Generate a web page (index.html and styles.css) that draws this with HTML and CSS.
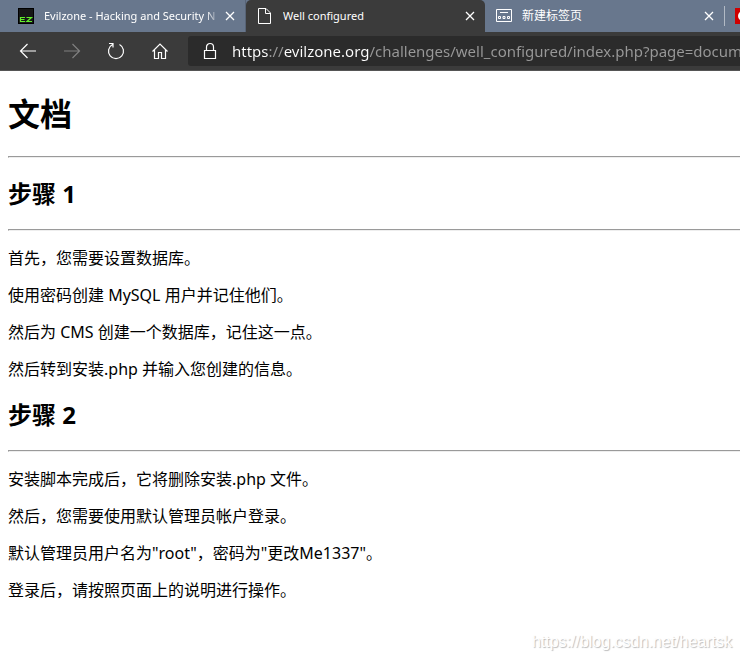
FILE: index.html
```html
<!DOCTYPE html>
<html lang="zh-CN">
<head>
<meta charset="utf-8">
<title>Well configured</title>
<link rel="stylesheet" href="styles.css">
</head>
<body>
<header class="browser">
  <div class="tabs">
    <div class="tab tab-first">
      <svg class="icon" viewBox="0 0 16 16"><rect x=".5" y=".5" width="15" height="15" fill="#171717" stroke="#000"/><path d="M7 9.500H2.500v4H7M2.500 11.500H6.500M8.500 9.500H13.500L9 13.500H14" fill="none" stroke="#62f02c" stroke-width="1.200"/></svg>
      <span class="tab-title fade">Evilzone - Hacking and Security N</span>
      <button class="close" aria-label="Close tab"><svg viewBox="0 0 10 10"><path d="M1 1l8 8M9 1l-8 8"/></svg></button>
    </div>
    <div class="tab tab-active">
      <svg class="icon" viewBox="0 0 16 16"><path d="M1.500.5H9L13.500 5V15.500H1.500ZM8.500.5V5.500H13.500" fill="none" stroke="#fff"/></svg>
      <span class="tab-title">Well configured</span>
      <button class="close" aria-label="Close tab"><svg viewBox="0 0 10 10"><path d="M1 1l8 8M9 1l-8 8"/></svg></button>
    </div>
    <div class="tab tab-new">
      <svg class="icon" viewBox="0 0 16 16"><path d="M.5 1.500h15v12H.5ZM4 4.500h8M2.500 8.500h2v2h-2ZM7 8.500h2v2H7ZM11.500 8.500h2v2h-2Z" fill="none" stroke="#fff"/></svg>
      <span class="tab-title">新建标签页</span>
      <button class="close" aria-label="Close tab"><svg viewBox="0 0 10 10"><path d="M1 1l8 8M9 1l-8 8"/></svg></button>
    </div>
    <div class="tab-next">
      <svg class="icon" viewBox="0 0 16 16"><rect width="16" height="16" fill="#d00000"/><circle cx="8" cy="8" r="5" fill="#fff"/></svg>
    </div>
  </div>
  <div class="toolbar">
    <button class="nav" aria-label="Back"><svg viewBox="0 0 18 18"><path d="M17 9H1.500M8.500 2l-7 7 7 7"/></svg></button>
    <button class="nav" aria-label="Forward" disabled><svg viewBox="0 0 18 18"><path d="M1 9h15.500M9.500 2l7 7-7 7"/></svg></button>
    <button class="nav" aria-label="Refresh"><svg viewBox="0 0 18 18"><path d="M5.500 2.500A7.500 7.500 0 1 0 12.500 2.500M2 1.500H6V5.500"/></svg></button>
    <button class="nav" aria-label="Home"><svg viewBox="0 0 18 18"><path d="M1.500 9.500L9 2l7.500 7.500M3.500 8v8.500h4v-6h3v6h4V8"/></svg></button>
    <div class="address">
      <svg class="lock" viewBox="0 0 14 18"><path d="M1.500 8.500h11v8h-11ZM3.500 8.500V5a3.500 3.500 0 0 1 7 0v3.500"/></svg>
      <input class="url" type="text" aria-label="Address" value="https://evilzone.org/challenges/well_configured/index.php?page=documentation">
    </div>
  </div>
</header>
<main class="page">
  <h1>文档</h1>
  <hr>
  <h2>步骤 1</h2>
  <hr>
  <p>首先，您需要设置数据库。</p>
  <p>使用密码创建 MySQL 用户并记住他们。</p>
  <p>然后为 CMS 创建一个数据库，记住这一点。</p>
  <p>然后转到安装.php 并输入您创建的信息。</p>
  <h2>步骤 2</h2>
  <hr>
  <p>安装脚本完成后，它将删除安装.php 文件。</p>
  <p>然后，您需要使用默认管理员帐户登录。</p>
  <p>默认管理员用户名为"root"，密码为"更改Me1337"。</p>
  <p>登录后，请按照页面上的说明进行操作。</p>
</main>
<div class="watermark">https://blog.csdn.net/heartsk</div>
</body>
</html>
```
FILE: styles.css
```css
* { box-sizing: border-box; }
body {
  margin: 0;
  min-height: 100vh;
  position: relative;
  overflow-x: hidden;
  background: #fff;
  color: #000;
  font: 16px/21px "Noto Sans", "Noto Sans CJK SC", sans-serif;
}
button { padding: 0; border: 0; background: none; color: #fff; }
svg { display: block; fill: none; stroke: currentColor; flex: none; }
.browser { background: #3b3b3b; border-bottom: 1px solid #555; }
.tabs { display: flex; height: 32px; background: #68778d; overflow: hidden; }
.tab {
  display: flex;
  align-items: center;
  flex: 0 0 239px;
  min-width: 0;
  padding: 0 10px 0 11px;
  color: #fff;
  font-size: 11px;
  line-height: 16px;
}
.tab-first { flex-basis: 246px; padding-left: 18px; border-right: 1px solid #586477; }
.tab-active { background: #3b3b3b; border-radius: 5px 5px 0 0; }
.tab-new { font-size: 12px; }
.icon { width: 16px; height: 16px; stroke: none; }
.tab-title { flex: 1; min-width: 0; margin: 0 4px 0 10px; overflow: hidden; white-space: nowrap; }
.fade { mask-image: linear-gradient(to right, #000 162px, transparent 176px); }
.close { width: 10px; height: 10px; }
.close svg { width: 10px; height: 10px; stroke-width: 1.3px; }
.tab-next { display: flex; align-items: center; flex: none; }
.tab-next::before { content: ""; width: 1px; height: 20px; margin-right: 10px; background: #b2bac5; }
.toolbar { display: flex; align-items: center; height: 38px; padding-left: 6px; }
.nav { display: flex; justify-content: center; flex: 0 0 44px; }
.nav svg { width: 18px; height: 18px; stroke-width: 1.2px; }
.nav:disabled { color: #808080; }
.address {
  display: flex;
  align-items: center;
  flex: 1;
  min-width: 0;
  height: 30px;
  margin-left: 6px;
  padding-left: 15px;
  background: #2b2b2b;
  border-radius: 3px 0 0 3px;
}
.lock { width: 14px; height: 18px; color: #fff; stroke-width: 1.2px; }
.url {
  flex: 1;
  min-width: 0;
  height: 26px;
  margin-left: 15px;
  padding: 0;
  border: 0;
  outline: 0;
  font: inherit;
  font-size: 15px;
  /* Scheme and host are bright, the rest of the address is dimmed. */
  background: linear-gradient(to right, #fff 37px, #999 37px 52px, #fff 52px 137px, #999 137px);
  -webkit-background-clip: text;
  background-clip: text;
  color: transparent;
}
.page { padding-left: 8px; display: flow-root; }
h1 { margin: 22px 0 21px; font-size: 32px; line-height: 42px; }
h2 { margin: 19px 0; font-size: 24px; line-height: 32px; }
hr { margin: 0; height: 2px; border: 1px solid #9a9a9a; border-bottom-color: #eee; border-right: 0; }
h1 + hr { margin-bottom: 20px; }
h2 + hr { margin-bottom: 17px; }
p { margin: 16px 0; }
.watermark {
  position: absolute;
  right: 8px;
  bottom: 8px;
  font: 16px/20px "Liberation Sans", sans-serif;
  color: #fff;
  text-shadow: 1px 1px 1px #bbb;
}
```
